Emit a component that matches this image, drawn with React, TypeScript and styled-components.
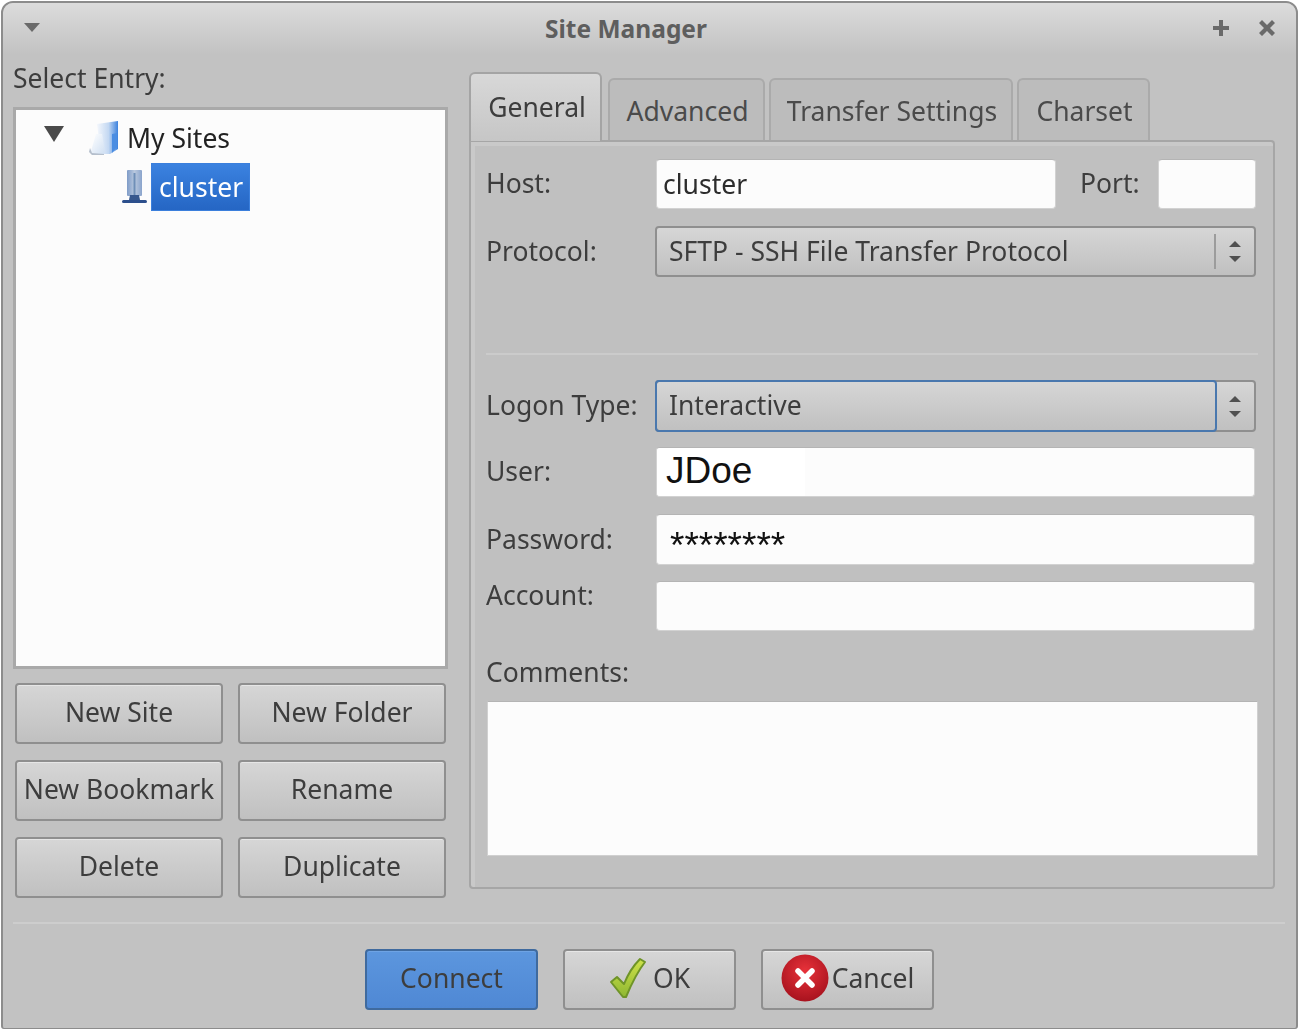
import styled, { createGlobalStyle } from 'styled-components'

const GlobalStyle = createGlobalStyle`
  html, body {
    margin: 0;
    padding: 0;
    background: #ffffff;
  }
  body {
    font-family: "Noto Sans", "Open Sans", sans-serif;
    font-size: 26.5px;
    color: #3d3d3d;
    overflow: hidden;
  }
`

const Window = styled.div`
  box-sizing: border-box;
  width: 1297px;
  height: 1028px;
  margin: 1px 0 0 1px;
  border: 2px solid #8c8c8c;
  border-bottom-width: 1px;
  border-radius: 12px 12px 3px 3px;
  background: #c2c2c2;
  display: flex;
  flex-direction: column;
  overflow: hidden;
  filter: blur(0.45px);
`

const TitleBar = styled.div`
  height: 52px;
  flex: none;
  box-sizing: border-box;
  padding: 0 19px 2px 19px;
  display: flex;
  align-items: center;
  justify-content: space-between;
  background: linear-gradient(#dcdcdc, #c2c2c2);
`

const TitleText = styled.div`
  font-weight: 700;
  font-size: 24.5px;
  color: #5e5e5e;
  margin-right: 1px;
`

const TitleActions = styled.div`
  display: flex;
  gap: 26px;
`

const Main = styled.div`
  flex: none;
  height: 844px;
  display: flex;
  padding: 0 22px 0 10px;
  gap: 20px;
`

const LeftColumn = styled.div`
  width: 436px;
  flex: none;
  display: flex;
  flex-direction: column;
`

const SectionLabel = styled.div`
  height: 52px;
  line-height: 46px;
  flex: none;
`

const TreeBox = styled.div`
  box-sizing: border-box;
  height: 562px;
  flex: none;
  margin-right: 1px;
  background: #fcfcfc;
  border: 3px solid #a9a9a9;
  padding: 3px 0 0 28px;
`

const TreeRow = styled.div<{ $indent: number; $height: number }>`
  display: flex;
  align-items: center;
  height: ${(p) => p.$height}px;
  padding-left: ${(p) => p.$indent}px;
`

const Expander = styled.div`
  width: 0;
  height: 0;
  border-left: 10px solid transparent;
  border-right: 10px solid transparent;
  border-top: 16px solid #4a4a4a;
  margin: 0 24px 8px 0;
`

const TreeName = styled.span`
  color: #222222;
  margin-left: 7px;
`

const SelectedName = styled.span`
  box-sizing: border-box;
  height: 48px;
  line-height: 47px;
  padding: 0 6px 0 7px;
  color: #ffffff;
  background: linear-gradient(#3b82e0, #2566c4);
  border: 1px solid #3b7fdc;
  margin-left: 4px;
`

const ButtonGrid = styled.div`
  display: grid;
  grid-template-columns: 208px 208px;
  grid-auto-rows: 61px;
  gap: 16px 15px;
  margin: 14px 0 0 2px;
`

const Button = styled.div`
  box-sizing: border-box;
  display: flex;
  align-items: center;
  justify-content: center;
  height: 61px;
  border: 2px solid #8f8f8f;
  border-radius: 4px;
  background: linear-gradient(#d6d6d6, #c0c0c0);
  box-shadow: inset 0 1px 0 #e6e6e6;
  padding-bottom: 3px;
  white-space: nowrap;
`

const Notebook = styled.div`
  flex: 1;
  display: flex;
  flex-direction: column;
  min-width: 0;
`

const TabBar = styled.div`
  display: flex;
  align-items: flex-end;
  height: 70px;
  margin-top: 15px;
  flex: none;
`

const Tab = styled.div<{ $active?: boolean; $width: number }>`
  box-sizing: border-box;
  width: ${(p) => p.$width}px;
  height: ${(p) => (p.$active ? 69 : 62)}px;
  margin-right: ${(p) => (p.$active ? 6 : 4)}px;
  margin-bottom: ${(p) => (p.$active ? -1 : 0)}px;
  padding-left: ${(p) => (p.$active ? 3 : 2)}px;
  position: relative;
  z-index: ${(p) => (p.$active ? 1 : 0)};
  border: 2px solid ${(p) => (p.$active ? '#a4a4a4' : '#aaaaaa')};
  border-bottom: ${(p) => (p.$active ? 'none' : '0')};
  border-radius: 6px 6px 0 0;
  background: ${(p) =>
    p.$active ? 'linear-gradient(#d8d8d8, #c6c6c6)' : '#bcbcbc'};
  text-align: center;
  line-height: ${(p) => (p.$active ? 66 : 62)}px;
  white-space: nowrap;
  color: ${(p) => (p.$active ? '#3d3d3d' : '#4a4a4a')};
`

const Panel = styled.div`
  box-sizing: border-box;
  width: 806px;
  height: 749px;
  flex: none;
  border: 2px solid #a6a6a6;
  border-radius: 0 4px 4px 4px;
  background: #c0c0c0;
  box-shadow: inset 4px 4px 0 #c9c9c9;
  padding: 17px 17px 0 15px;
`

const FormRow = styled.div<{ $height: number; $gap: number }>`
  display: flex;
  align-items: center;
  height: ${(p) => p.$height}px;
  margin-bottom: ${(p) => p.$gap}px;
`

const RowLabel = styled.div<{ $raised?: boolean }>`
  width: 169px;
  flex: none;
  margin-top: ${(p) => (p.$raised ? -22 : -2)}px;
  white-space: nowrap;
`

const TextField = styled.div<{ $width?: number }>`
  box-sizing: border-box;
  ${(p) => (p.$width ? `width: ${p.$width}px; flex: none;` : 'width: 599px;')}
  height: 100%;
  margin-left: 1px;
  display: flex;
  align-items: center;
  background: #fcfcfc;
  border: 1px solid #d2d2d2;
  border-top-color: #b4b4b4;
  border-radius: 4px;
  padding: 0 0 0 6px;
  color: #2c2c2c;
  overflow: hidden;
`

const PortLabel = styled.div`
  margin: 0 17px 2px 24px;
`

const PastedName = styled.div`
  font-family: "Liberation Sans", Arial, sans-serif;
  font-size: 37px;
  color: #111111;
  background: #ffffff;
  width: 148px;
  height: 100%;
  margin-left: -6px;
  padding: 0 0 2px 9px;
  box-sizing: border-box;
  display: flex;
  align-items: center;
`

const Stars = styled.div`
  font-family: "Liberation Sans", Arial, sans-serif;
  font-size: 37px;
  color: #111111;
  line-height: 1;
  margin: 11px 0 0 7px;
`

const Combo = styled.div`
  box-sizing: border-box;
  width: 601px;
  height: 100%;
  display: flex;
  border: 2px solid #8f8f8f;
  border-radius: 4px;
  background: linear-gradient(#d6d6d6, #c0c0c0);
  position: relative;
`

const ComboValue = styled.div`
  flex: 1;
  display: flex;
  align-items: center;
  padding: 0 0 2px 12px;
  white-space: nowrap;
`

const FocusRing = styled.div`
  position: absolute;
  left: -2px;
  top: -2px;
  bottom: -2px;
  right: 37px;
  border: 2px solid #4a78ae;
  border-radius: 4px;
  pointer-events: none;
`

const ComboDivider = styled.div`
  width: 2px;
  background: #9c9c9c;
  margin: 6px 0;
  flex: none;
`

const Spinner = styled.div`
  width: 38px;
  flex: none;
  display: flex;
  flex-direction: column;
  align-items: center;
  justify-content: center;
  gap: 9px;
`

const Arrow = styled.div<{ $up?: boolean }>`
  width: 0;
  height: 0;
  border-left: 6px solid transparent;
  border-right: 6px solid transparent;
  ${(p) => (p.$up ? 'border-bottom' : 'border-top')}: 6px solid #505050;
`

const Separator = styled.div`
  height: 2px;
  background: #cbcbcb;
  width: 772px;
  margin: 0 0 25px 0;
`

const CommentsLabel = styled.div`
  height: 70px;
  line-height: 82px;
`

const CommentBox = styled.div`
  box-sizing: border-box;
  width: 771px;
  height: 155px;
  margin-left: 1px;
  background: #fcfcfc;
  border: 1px solid #d0d0d0;
  border-top-color: #b4b4b4;
`

const BottomRule = styled.div`
  height: 2px;
  background: #cdcdcd;
  margin: 23px 11px 0 10px;
  flex: none;
`

const Footer = styled.div`
  flex: none;
  display: flex;
  gap: 25px;
  padding: 25px 0 0 362px;
`

const FooterButton = styled(Button)<{ $primary?: boolean; $gap?: number }>`
  width: 173px;
  gap: ${(p) => p.$gap ?? 3}px;
  ${(p) =>
    p.$primary &&
    `
    background: linear-gradient(#5c96de, #4f88d4);
    border-color: #3f6a9e;
    box-shadow: inset 0 1px 0 #6ea3e4;
  `}
`

const MenuIcon = () => (
  <svg width="20" height="14" viewBox="0 0 20 14">
    <path d="M2 2h16l-8 9z" fill="#6a6a6a" />
  </svg>
)

const MaximizeIcon = () => (
  <svg width="20" height="20" viewBox="0 0 20 20">
    <path d="M8 2h4v6h6v4h-6v6H8v-6H2V8h6z" fill="#6a6a6a" />
  </svg>
)

const CloseIcon = () => (
  <svg width="20" height="20" viewBox="0 0 20 20">
    <path d="M2 5l3-3 5 5 5-5 3 3-5 5 5 5-3 3-5-5-5 5-3-3 5-5z" fill="#6a6a6a" />
  </svg>
)

const FolderIcon = () => (
  <svg width="32" height="36" viewBox="0 0 32 36">
    <defs>
      <linearGradient id="folderBack" x1="0" y1="0" x2="1" y2="0">
        <stop offset="0" stopColor="#f4f7fc" />
        <stop offset="0.55" stopColor="#c3d8f2" />
        <stop offset="1" stopColor="#3c82de" />
      </linearGradient>
      <linearGradient id="folderPage" x1="0" y1="0" x2="1" y2="1">
        <stop offset="0" stopColor="#ffffff" />
        <stop offset="1" stopColor="#cfdff2" />
      </linearGradient>
    </defs>
    <path d="M9 4l21-3v28l-8 5h-9z" fill="url(#folderBack)" />
    <path d="M8 14h6l3 18-1 2H4l-1-3z" fill="url(#folderPage)" />
    <path d="M2 28l2 5 12 1v1H4l-3-3z" fill="#b5bfcc" />
    <path d="M24 14l5-1v14l-5 6z" fill="#4a8de2" />
  </svg>
)

const ServerIcon = () => (
  <svg width="26" height="36" viewBox="0 0 26 36">
    <defs>
      <linearGradient id="serverBody" x1="0" y1="0" x2="1" y2="0">
        <stop offset="0" stopColor="#7f9cc8" />
        <stop offset="0.5" stopColor="#b9c8de" />
        <stop offset="1" stopColor="#8aa4cc" />
      </linearGradient>
    </defs>
    <rect x="6" y="1" width="15" height="26" rx="1" fill="url(#serverBody)" />
    <rect x="12.5" y="4" width="2" height="24" fill="#6f8fb8" />
    <path d="M9 26h9l1 5H8z" fill="#37588e" />
    <rect x="1" y="31" width="25" height="3" rx="1.5" fill="#2c4f8c" />
  </svg>
)

const CheckIcon = () => (
  <svg width="38" height="42" viewBox="0 0 38 42">
    <defs>
      <linearGradient id="checkFill" x1="0" y1="0" x2="0" y2="1">
        <stop offset="0" stopColor="#cfe24a" />
        <stop offset="1" stopColor="#8fb832" />
      </linearGradient>
    </defs>
    <path
      d="M2 25l6-5 7 7C19 17 25 8 31 2l5 3C29 14 22 28 17 40h-3z"
      fill="url(#checkFill)"
      stroke="#6f9428"
      strokeWidth="2"
      strokeLinejoin="round"
    />
  </svg>
)

const CancelIcon = () => (
  <svg width="48" height="48" viewBox="0 0 48 48">
    <defs>
      <radialGradient id="cancelFill" cx="0.5" cy="0.35" r="0.7">
        <stop offset="0" stopColor="#e8323a" />
        <stop offset="1" stopColor="#a3101c" />
      </radialGradient>
    </defs>
    <circle cx="24" cy="24" r="23.5" fill="url(#cancelFill)" />
    <path d="M17 17l14 14M31 17L17 31" stroke="#ffffff" strokeWidth="5.5" strokeLinecap="round" />
  </svg>
)

const SITE_BUTTONS = ['New Site', 'New Folder', 'New Bookmark', 'Rename', 'Delete', 'Duplicate']

const TABS = [
  { name: 'General', width: 133, active: true },
  { name: 'Advanced', width: 157 },
  { name: 'Transfer Settings', width: 244 },
  { name: 'Charset', width: 133 },
]

const ComboField = ({ value, focus }: { value: string; focus?: boolean }) => (
  <Combo>
    <ComboValue>{value}</ComboValue>
    {!focus && <ComboDivider />}
    <Spinner>
      <Arrow $up />
      <Arrow />
    </Spinner>
    {focus && <FocusRing />}
  </Combo>
)

export default function App() {
  return (
    <>
      <GlobalStyle />
      <Window>
        <TitleBar>
          <MenuIcon />
          <TitleText>Site Manager</TitleText>
          <TitleActions>
            <MaximizeIcon />
            <CloseIcon />
          </TitleActions>
        </TitleBar>
        <Main>
          <LeftColumn>
            <SectionLabel>Select Entry:</SectionLabel>
            <TreeBox>
              <TreeRow $indent={0} $height={50}>
                <Expander />
                <FolderIcon />
                <TreeName>My Sites</TreeName>
              </TreeRow>
              <TreeRow $indent={77} $height={48}>
                <ServerIcon />
                <SelectedName>cluster</SelectedName>
              </TreeRow>
            </TreeBox>
            <ButtonGrid>
              {SITE_BUTTONS.map((name) => (
                <Button key={name}>{name}</Button>
              ))}
            </ButtonGrid>
          </LeftColumn>
          <Notebook>
            <TabBar>
              {TABS.map((tab) => (
                <Tab key={tab.name} $active={tab.active} $width={tab.width}>
                  {tab.name}
                </Tab>
              ))}
            </TabBar>
            <Panel>
              <FormRow $height={50} $gap={17}>
                <RowLabel>Host:</RowLabel>
                <TextField $width={400}>cluster</TextField>
                <PortLabel>Port:</PortLabel>
                <TextField $width={98} />
              </FormRow>
              <FormRow $height={51} $gap={76}>
                <RowLabel>Protocol:</RowLabel>
                <ComboField value="SFTP - SSH File Transfer Protocol" />
              </FormRow>
              <Separator />
              <FormRow $height={52} $gap={15}>
                <RowLabel>Logon Type:</RowLabel>
                <ComboField value="Interactive" focus />
              </FormRow>
              <FormRow $height={50} $gap={17}>
                <RowLabel>User:</RowLabel>
                <TextField>
                  <PastedName>JDoe</PastedName>
                </TextField>
              </FormRow>
              <FormRow $height={51} $gap={16}>
                <RowLabel>Password:</RowLabel>
                <TextField>
                  <Stars>********</Stars>
                </TextField>
              </FormRow>
              <FormRow $height={50} $gap={0}>
                <RowLabel $raised>Account:</RowLabel>
                <TextField />
              </FormRow>
              <CommentsLabel>Comments:</CommentsLabel>
              <CommentBox />
            </Panel>
          </Notebook>
        </Main>
        <BottomRule />
        <Footer>
          <FooterButton $primary>Connect</FooterButton>
          <FooterButton $gap={6}>
            <CheckIcon />
            OK
          </FooterButton>
          <FooterButton>
            <CancelIcon />
            Cancel
          </FooterButton>
        </Footer>
      </Window>
    </>
  )
}
